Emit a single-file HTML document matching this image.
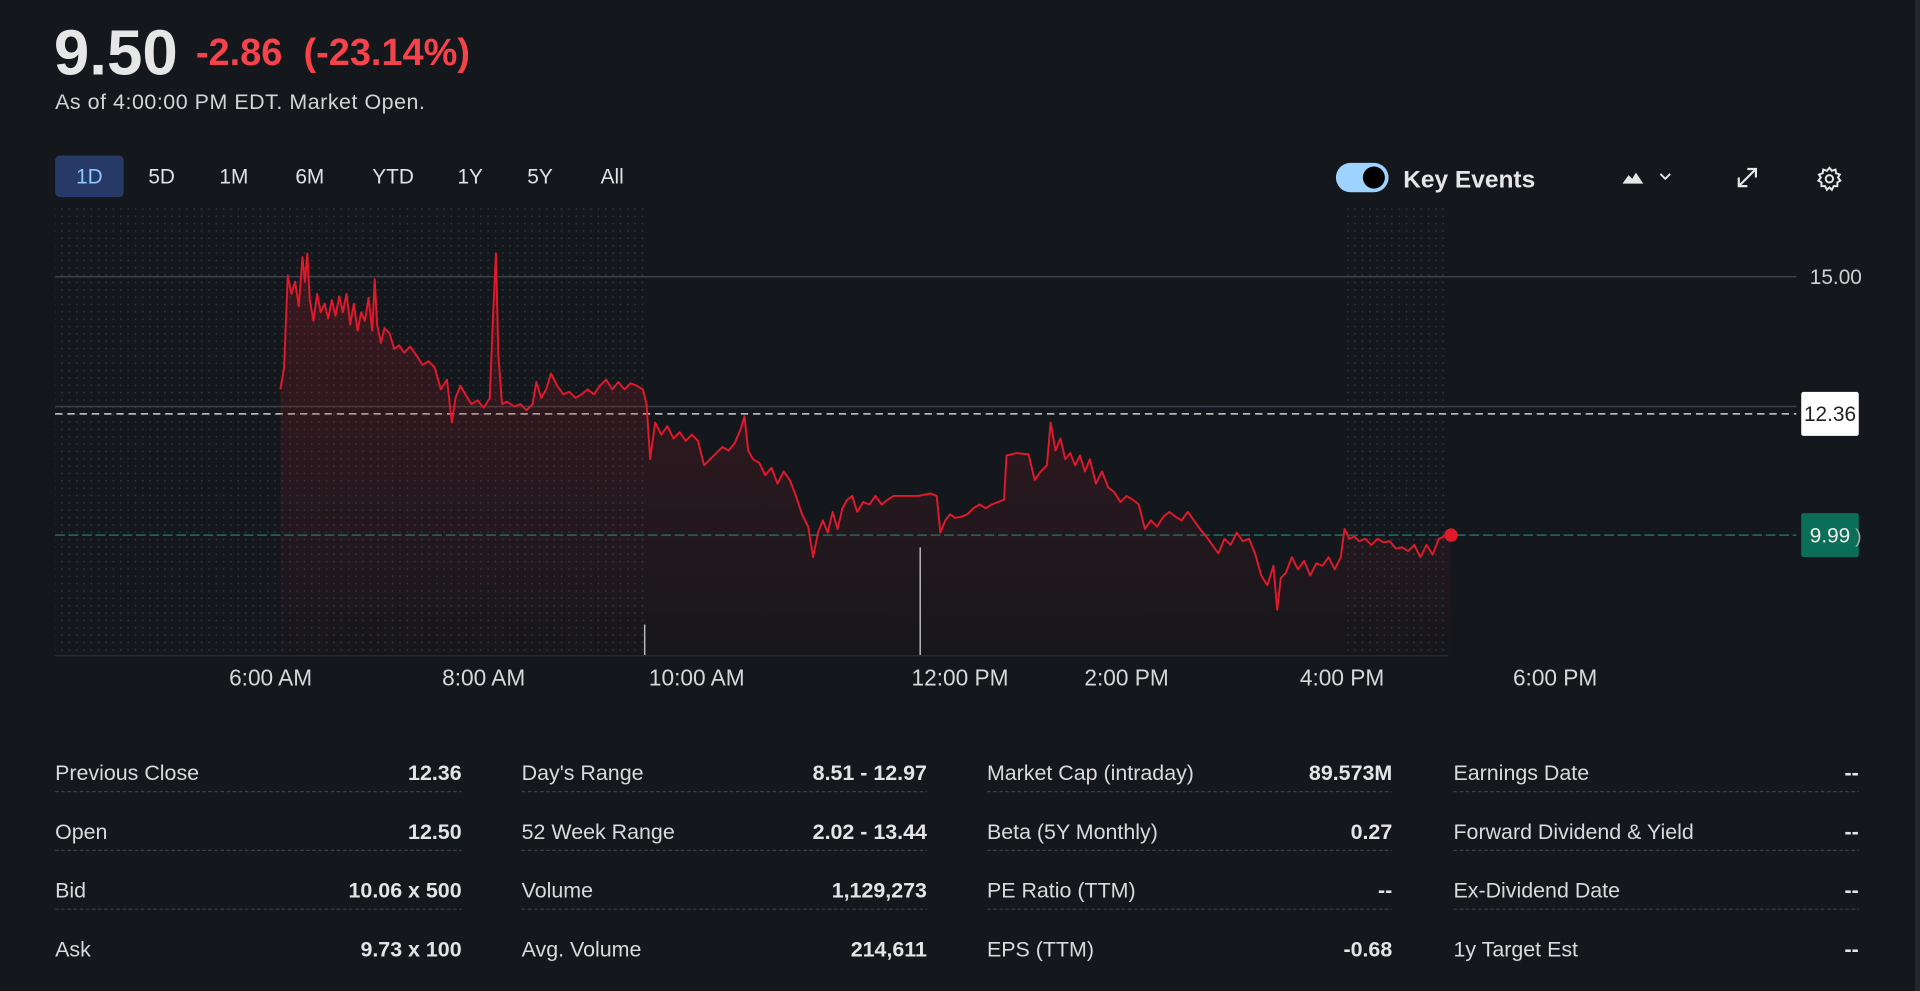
<!DOCTYPE html>
<html><head><meta charset="utf-8"><style>
html,body{margin:0;padding:0;background:#14171c;width:1920px;height:991px;overflow:hidden}
svg{display:block}
text{font-family:"Liberation Sans",sans-serif}
</style></head><body>
<svg width="1920" height="991" viewBox="0 0 1568 809.3" xmlns="http://www.w3.org/2000/svg">
<defs>
<pattern id="dots" x="0" y="0" width="6" height="6" patternUnits="userSpaceOnUse"><rect x="2" y="2" width="1.3" height="1.3" fill="#30343c"/></pattern>
<linearGradient id="fillg" x1="0" y1="0" x2="0" y2="1"><stop offset="0" stop-color="#8a1c26" stop-opacity="0.35"/><stop offset="1" stop-color="#8a1c26" stop-opacity="0.02"/></linearGradient>
</defs>
<rect width="1568" height="810" fill="#14171c"/>
<rect x="1564" y="0" width="4" height="810" fill="#24272d"/>
<text x="44" y="61" font-size="52" font-weight="bold" fill="#e6e6e6">9.50</text>
<text x="160" y="53" font-size="31" font-weight="bold" fill="#f5424b" xml:space="preserve">-2.86  (-23.14%)</text>
<text x="45" y="89" font-size="17.5" fill="#d4d4d4" textLength="302">As of 4:00:00 PM EDT. Market Open.</text>
<rect x="45" y="127" width="56" height="34" rx="4" fill="#263967"/>
<g font-size="17" fill="#e2e2e2" text-anchor="middle">
<text x="73" y="150" fill="#8fc6ff">1D</text><text x="132" y="150">5D</text><text x="191" y="150">1M</text><text x="253" y="150">6M</text><text x="321" y="150">YTD</text><text x="384" y="150">1Y</text><text x="441" y="150">5Y</text><text x="500" y="150">All</text>
</g>
<rect x="1091" y="133" width="43" height="24" rx="12" fill="#9fd3ff"/>
<circle cx="1122" cy="145" r="9" fill="#000"/>
<text x="1146" y="153" font-size="20" font-weight="bold" fill="#e6e6e6">Key Events</text>
<path d="M1325 150 L1330 143 L1333 146 L1336 141 L1342 150 Z" fill="#e6e6e6"/>
<path d="M1356 142 L1360 146 L1364 142" stroke="#e6e6e6" stroke-width="1.6" fill="none"/>
<path d="M1420 152 L1434 138 M1427 138 H1434 V145 M1420 145 V152 H1427" stroke="#e6e6e6" stroke-width="1.8" fill="none"/>
<g transform="translate(1494 146)" stroke="#e6e6e6" stroke-width="1.6" fill="none">
<circle r="3"/><path d="M0 -9 L2 -6.5 L5 -7.5 L5.5 -4.5 L8.5 -3.5 L7 -1 L9 1.5 L6.5 3 L6.5 6 L3.5 6 L2 9 L0 7 L-2 9 L-3.5 6 L-6.5 6 L-6.5 3 L-9 1.5 L-7 -1 L-8.5 -3.5 L-5.5 -4.5 L-5 -7.5 L-2 -6.5 Z"/>
</g>
<rect x="45" y="170" width="482" height="365" fill="url(#dots)"/>
<rect x="1097" y="170" width="86" height="365" fill="url(#dots)"/>
<line x1="45" y1="226" x2="1467" y2="226" stroke="#3c4048" stroke-width="1.2"/>
<line x1="45" y1="332" x2="1467" y2="332" stroke="#3c4048" stroke-width="1.2"/>
<line x1="45" y1="338" x2="1467" y2="338" stroke="#cfcfcf" stroke-width="1.2" stroke-dasharray="6 4"/>
<line x1="45" y1="437" x2="1467" y2="437" stroke="#1f6f5f" stroke-width="1.2" stroke-dasharray="8 3"/>
<text x="1478" y="232" font-size="17" fill="#d0d0d0">15.00</text>
<rect x="1471" y="320" width="47" height="36" rx="2" fill="#fff"/>
<text x="1494.5" y="344" font-size="17" fill="#222" text-anchor="middle">12.36</text>
<rect x="1471" y="419" width="47" height="36" rx="2" fill="#0b6e58"/>
<text x="1494.5" y="443" font-size="17" fill="#eee" text-anchor="middle">9.99</text>
<text x="1515" y="443" font-size="16" fill="#aaa">)</text>
<polygon fill="url(#fillg)" points="229,535 229,318 232,300 235,225 238,240 241,230 244,250 247,210 249,230 251,207 253,245 256,262 259,240 262,255 265,248 268,260 271,245 274,258 277,242 280,255 283,240 286,265 289,248 292,270 295,255 298,262 301,243 304,270 306,228 308,265 311,280 314,268 318,272 322,285 326,282 330,288 335,283 340,290 345,298 350,295 355,300 360,318 365,310 369,345 372,325 376,315 380,322 385,330 390,327 395,333 400,325 403,250 405,207 407,290 410,330 414,328 420,332 425,330 430,335 435,330 438,312 442,325 446,318 450,305 455,315 460,322 465,320 470,325 475,322 480,318 485,322 490,315 495,310 500,318 505,312 510,318 515,313 520,315 525,318 528,330 531,375 535,345 540,355 545,348 550,358 555,353 560,360 565,355 570,360 575,380 580,375 585,370 590,365 595,368 600,362 605,350 608,340 611,368 615,375 620,378 625,388 630,382 635,395 640,385 645,392 650,405 655,420 660,430 664,455 668,435 672,425 676,435 680,418 684,432 688,415 692,408 696,405 700,418 705,410 710,412 715,405 720,412 725,408 730,405 740,405 750,405 760,403 765,405 768,435 772,425 776,420 780,423 785,422 790,420 795,415 800,412 805,415 810,412 815,410 820,408 822,372 830,370 840,371 845,392 850,385 855,380 858,345 862,368 866,358 870,375 874,370 878,380 882,372 886,385 890,375 895,395 900,385 905,398 910,402 915,410 920,405 925,408 930,412 935,432 940,425 945,430 950,422 955,418 960,422 965,425 970,418 975,425 980,432 985,438 990,445 995,452 1000,440 1005,445 1010,435 1015,442 1020,440 1025,452 1030,470 1035,478 1040,462 1043,498 1046,472 1050,468 1055,455 1060,465 1065,458 1070,470 1075,460 1080,462 1085,455 1090,465 1095,455 1098,432 1102,440 1106,438 1110,442 1115,440 1120,445 1125,440 1130,443 1135,442 1140,448 1145,447 1150,450 1155,445 1160,455 1165,445 1170,453 1175,440 1180,438 1185,437 1185,535"/>
<polyline fill="none" stroke="#e0192b" stroke-width="1.6" stroke-linejoin="round" points="229,318 232,300 235,225 238,240 241,230 244,250 247,210 249,230 251,207 253,245 256,262 259,240 262,255 265,248 268,260 271,245 274,258 277,242 280,255 283,240 286,265 289,248 292,270 295,255 298,262 301,243 304,270 306,228 308,265 311,280 314,268 318,272 322,285 326,282 330,288 335,283 340,290 345,298 350,295 355,300 360,318 365,310 369,345 372,325 376,315 380,322 385,330 390,327 395,333 400,325 403,250 405,207 407,290 410,330 414,328 420,332 425,330 430,335 435,330 438,312 442,325 446,318 450,305 455,315 460,322 465,320 470,325 475,322 480,318 485,322 490,315 495,310 500,318 505,312 510,318 515,313 520,315 525,318 528,330 531,375 535,345 540,355 545,348 550,358 555,353 560,360 565,355 570,360 575,380 580,375 585,370 590,365 595,368 600,362 605,350 608,340 611,368 615,375 620,378 625,388 630,382 635,395 640,385 645,392 650,405 655,420 660,430 664,455 668,435 672,425 676,435 680,418 684,432 688,415 692,408 696,405 700,418 705,410 710,412 715,405 720,412 725,408 730,405 740,405 750,405 760,403 765,405 768,435 772,425 776,420 780,423 785,422 790,420 795,415 800,412 805,415 810,412 815,410 820,408 822,372 830,370 840,371 845,392 850,385 855,380 858,345 862,368 866,358 870,375 874,370 878,380 882,372 886,385 890,375 895,395 900,385 905,398 910,402 915,410 920,405 925,408 930,412 935,432 940,425 945,430 950,422 955,418 960,422 965,425 970,418 975,425 980,432 985,438 990,445 995,452 1000,440 1005,445 1010,435 1015,442 1020,440 1025,452 1030,470 1035,478 1040,462 1043,498 1046,472 1050,468 1055,455 1060,465 1065,458 1070,470 1075,460 1080,462 1085,455 1090,465 1095,455 1098,432 1102,440 1106,438 1110,442 1115,440 1120,445 1125,440 1130,443 1135,442 1140,448 1145,447 1150,450 1155,445 1160,455 1165,445 1170,453 1175,440 1180,438 1185,437"/>
<circle cx="1185" cy="437" r="5.5" fill="#e0192b"/>
<line x1="526.5" y1="510" x2="526.5" y2="535" stroke="#bbb" stroke-width="1.2"/>
<line x1="751.5" y1="447" x2="751.5" y2="535" stroke="#bbb" stroke-width="1.2"/>
<line x1="45" y1="535.5" x2="1183" y2="535.5" stroke="#2a2e35" stroke-width="1"/>
<g font-size="18.5" fill="#d8d8d8" text-anchor="middle">
<text x="221" y="560">6:00 AM</text><text x="395" y="560">8:00 AM</text><text x="569" y="560">10:00 AM</text><text x="784" y="560">12:00 PM</text><text x="920" y="560">2:00 PM</text><text x="1096" y="560">4:00 PM</text><text x="1270" y="560">6:00 PM</text>
</g>
<g font-size="17.5" fill="#dadada">
<text x="45" y="637">Previous Close</text><text x="45" y="685">Open</text><text x="45" y="733">Bid</text><text x="45" y="781">Ask</text>
<text x="426" y="637">Day's Range</text><text x="426" y="685">52 Week Range</text><text x="426" y="733">Volume</text><text x="426" y="781">Avg. Volume</text>
<text x="806" y="637">Market Cap (intraday)</text><text x="806" y="685">Beta (5Y Monthly)</text><text x="806" y="733">PE Ratio (TTM)</text><text x="806" y="781">EPS (TTM)</text>
<text x="1187" y="637">Earnings Date</text><text x="1187" y="685">Forward Dividend &amp; Yield</text><text x="1187" y="733">Ex-Dividend Date</text><text x="1187" y="781">1y Target Est</text>
</g>
<g font-size="17.5" font-weight="bold" fill="#e4e4e4" text-anchor="end">
<text x="377" y="637">12.36</text><text x="377" y="685">12.50</text><text x="377" y="733">10.06 x 500</text><text x="377" y="781">9.73 x 100</text>
<text x="757" y="637">8.51 - 12.97</text><text x="757" y="685">2.02 - 13.44</text><text x="757" y="733">1,129,273</text><text x="757" y="781">214,611</text>
<text x="1137" y="637">89.573M</text><text x="1137" y="685">0.27</text><text x="1137" y="733">--</text><text x="1137" y="781">-0.68</text>
<text x="1518" y="637">--</text><text x="1518" y="685">--</text><text x="1518" y="733">--</text><text x="1518" y="781">--</text>
</g>
<g stroke="#3a3e46" stroke-width="1" stroke-dasharray="3 2">
<line x1="45" y1="646.5" x2="377" y2="646.5"/><line x1="45" y1="694.5" x2="377" y2="694.5"/><line x1="45" y1="742.5" x2="377" y2="742.5"/>
<line x1="426" y1="646.5" x2="757" y2="646.5"/><line x1="426" y1="694.5" x2="757" y2="694.5"/><line x1="426" y1="742.5" x2="757" y2="742.5"/>
<line x1="806" y1="646.5" x2="1137" y2="646.5"/><line x1="806" y1="694.5" x2="1137" y2="694.5"/><line x1="806" y1="742.5" x2="1137" y2="742.5"/>
<line x1="1187" y1="646.5" x2="1518" y2="646.5"/><line x1="1187" y1="694.5" x2="1518" y2="694.5"/><line x1="1187" y1="742.5" x2="1518" y2="742.5"/>
</g>
</svg>
</body></html>
